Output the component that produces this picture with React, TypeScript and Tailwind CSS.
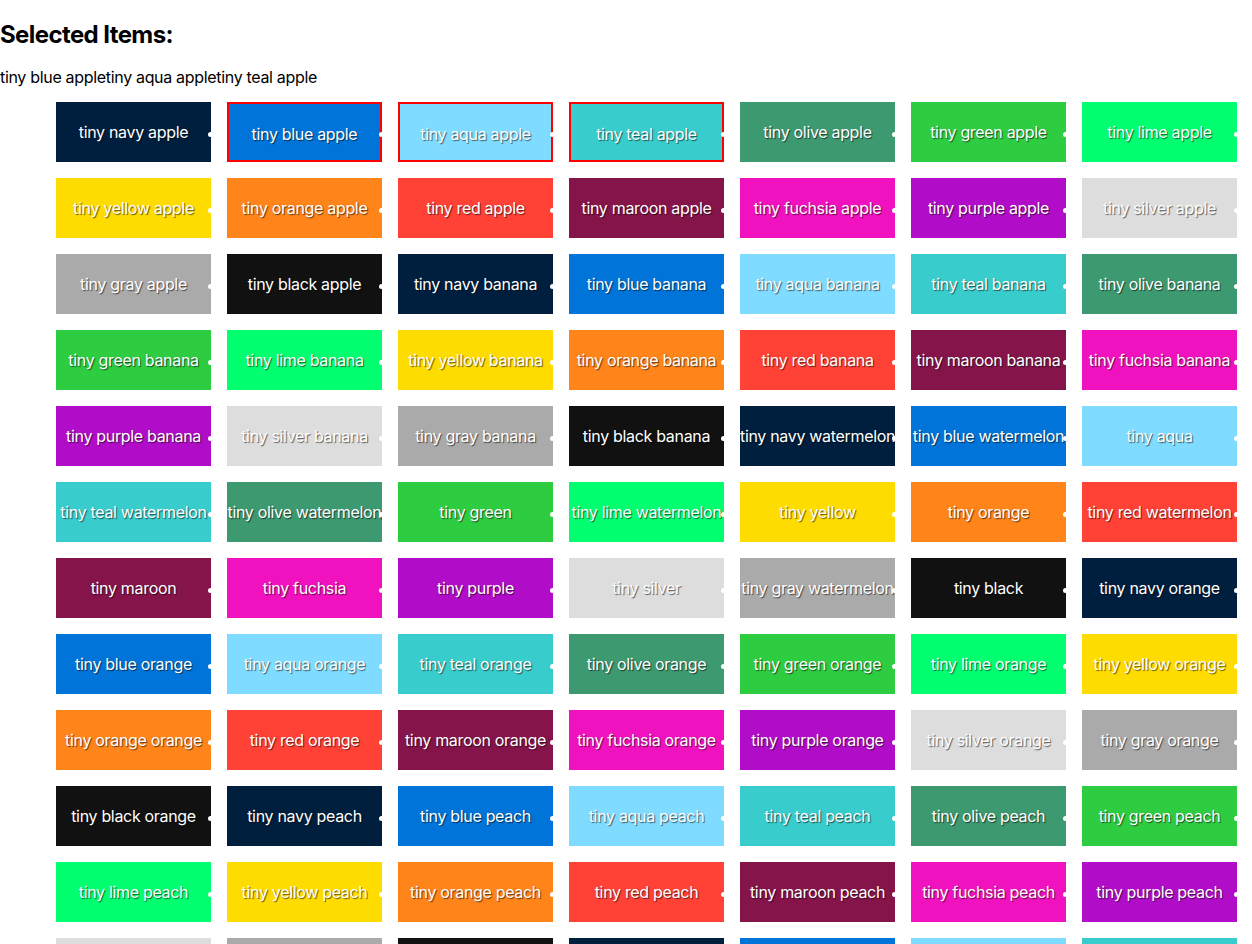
import React from 'react';

const colors: { name: string; hex: string }[] = [
    { name: 'navy', hex: '#001f3f' },
    { name: 'blue', hex: '#0074d9' },
    { name: 'aqua', hex: '#7fdbff' },
    { name: 'teal', hex: '#39cccc' },
    { name: 'olive', hex: '#3d9970' },
    { name: 'green', hex: '#2ecc40' },
    { name: 'lime', hex: '#01ff70' },
    { name: 'yellow', hex: '#ffdc00' },
    { name: 'orange', hex: '#ff851b' },
    { name: 'red', hex: '#ff4136' },
    { name: 'maroon', hex: '#85144b' },
    { name: 'fuchsia', hex: '#f012be' },
    { name: 'purple', hex: '#b10dc9' },
    { name: 'silver', hex: '#dddddd' },
    { name: 'gray', hex: '#aaaaaa' },
    { name: 'black', hex: '#111111' },
];

// some watermelons lost their fruit name
const shortWatermelon = ['aqua', 'green', 'yellow', 'orange', 'maroon', 'fuchsia', 'purple', 'silver', 'black'];

const fruits = ['apple', 'banana', 'watermelon', 'orange', 'peach', 'plum'];

const items = fruits.flatMap(fruit =>
    colors.map(c => ({
        label:
            fruit === 'watermelon' && shortWatermelon.includes(c.name)
                ? `tiny ${c.name}`
                : `tiny ${c.name} ${fruit}`,
        hex: c.hex,
    }))
);

const selected = ['tiny blue apple', 'tiny aqua apple', 'tiny teal apple'];

export default function App() {
    return (
        <div className="bg-white text-black font-['Inter',sans-serif] tracking-[-0.02em] h-[944px] overflow-hidden">
            <h2 className="text-2xl font-bold leading-[29px] pt-5 m-0 tracking-[-0.025em]">Selected Items:</h2>
            <p className="text-base leading-[19px] mt-[19px]">{selected.join('')}</p>
            <ul className="flex flex-wrap pl-12 mt-[7px]">
                {items.map((item, i) => {
                    const isSel = selected.includes(item.label);
                    return (
                        <li
                            key={i}
                            className={
                                'relative m-2 w-[155px] h-[60px] pt-[18px] text-center text-white text-base leading-6 whitespace-nowrap [text-shadow:1px_1px_1px_rgba(0,0,0,0.6)] ' +
                                (isSel ? 'border-2 border-[#ff0000]' : '')
                            }
                            style={{ backgroundColor: item.hex }}
                        >
                            <div className="overflow-hidden">{item.label}</div>
                            <span
                                className={
                                    'absolute w-[5px] h-[5px] rounded-full bg-white ' +
                                    (isSel ? 'right-[-4px] top-[28px]' : 'right-[-2px] top-[30px]')
                                }
                            />
                        </li>
                    );
                })}
            </ul>
        </div>
    );
}
